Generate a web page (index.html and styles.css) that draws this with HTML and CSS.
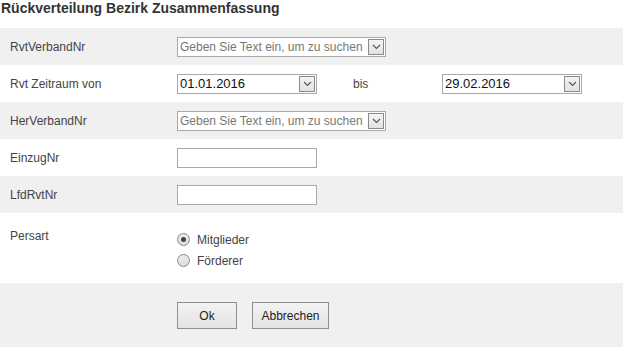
FILE: index.html
```html
<!DOCTYPE html>
<html lang="de">
<head>
    <meta charset="UTF-8">
    <title>Rückverteilung Bezirk Zusammenfassung</title>
    <link rel="stylesheet" href="styles.css">
</head>
<body>
    <h1 class="title">Rückverteilung Bezirk Zusammenfassung</h1>
    <div class="form">
        <div class="row grey">
            <div class="label">RvtVerbandNr</div>
            <div class="combo search">
                <span class="combo-text placeholder">Geben Sie Text ein, um zu suchen</span>
                <span class="arrow"><svg width="9" height="6" viewBox="0 0 9 6"><path d="M1 1 L4.5 4.5 L8 1" fill="none" stroke="#555" stroke-width="1.1"/></svg></span>
            </div>
        </div>
        <div class="row">
            <div class="label">Rvt Zeitraum von</div>
            <div class="combo date">
                <span class="combo-text">01.01.2016</span>
                <span class="arrow"><svg width="9" height="6" viewBox="0 0 9 6"><path d="M1 1 L4.5 4.5 L8 1" fill="none" stroke="#555" stroke-width="1.1"/></svg></span>
            </div>
            <div class="bis">bis</div>
            <div class="combo date">
                <span class="combo-text">29.02.2016</span>
                <span class="arrow"><svg width="9" height="6" viewBox="0 0 9 6"><path d="M1 1 L4.5 4.5 L8 1" fill="none" stroke="#555" stroke-width="1.1"/></svg></span>
            </div>
        </div>
        <div class="row grey">
            <div class="label">HerVerbandNr</div>
            <div class="combo search">
                <span class="combo-text placeholder">Geben Sie Text ein, um zu suchen</span>
                <span class="arrow"><svg width="9" height="6" viewBox="0 0 9 6"><path d="M1 1 L4.5 4.5 L8 1" fill="none" stroke="#555" stroke-width="1.1"/></svg></span>
            </div>
        </div>
        <div class="row">
            <div class="label">EinzugNr</div>
            <input class="textbox" type="text">
        </div>
        <div class="row grey">
            <div class="label">LfdRvtNr</div>
            <input class="textbox" type="text">
        </div>
        <div class="row tall">
            <div class="label">Persart</div>
            <div class="radios">
                <div class="radio"><span class="dot checked"></span>Mitglieder</div>
                <div class="radio"><span class="dot"></span>Förderer</div>
            </div>
        </div>
        <div class="buttons">
            <button class="btn ok">Ok</button>
            <button class="btn cancel">Abbrechen</button>
        </div>
    </div>
</body>
</html>
```
FILE: styles.css
```css
body {
    margin: 0;
    font-family: "Liberation Sans", Arial, sans-serif;
    font-size: 12px;
    color: #333;
    background: #fff;
}
.title {
    margin: 0;
    padding: 0 0 0 1px;
    height: 28px;
    font-size: 14px;
    font-weight: bold;
    color: #333;
    line-height: 17px;
}
.row {
    display: flex;
    align-items: center;
    height: 37px;
}
.row.grey {
    background: #f0f0f0;
}
.label {
    width: 167px;
    padding-left: 10px;
    color: #444;
}
.combo {
    display: flex;
    align-items: center;
    box-sizing: border-box;
    height: 20px;
    border: 1px solid #a9a9a9;
    background: #fff;
    padding: 0 1px 0 2px;
}
.combo.search {
    width: 209px;
}
.combo.date {
    width: 140px;
}
.combo-text {
    flex: 1;
    white-space: nowrap;
    overflow: hidden;
    color: #111;
    font-size: 13px;
}
.combo-text.placeholder {
    color: #777;
    font-size: 12px;
}
.arrow {
    display: flex;
    align-items: center;
    justify-content: center;
    box-sizing: border-box;
    width: 16px;
    height: 16px;
    border: 1px solid #8a8a8a;
    background: linear-gradient(#f4f4f4, #e2e2e2);
}
.bis {
    width: 125px;
    padding-left: 36px;
    box-sizing: border-box;
    color: #444;
}
.textbox {
    box-sizing: border-box;
    width: 140px;
    height: 20px;
    margin: 0;
    border: 1px solid #a9a9a9;
    font-family: inherit;
}
.row.tall {
    height: 70px;
    align-items: flex-start;
}
.row.tall .label {
    padding-top: 16px;
}
.radios {
    padding-top: 16px;
}
.radio {
    display: flex;
    align-items: center;
    height: 21px;
    color: #444;
}
.dot {
    box-sizing: border-box;
    width: 13px;
    height: 13px;
    margin-right: 7px;
    border: 1px solid #8a8a8a;
    border-radius: 50%;
    background: linear-gradient(#ececec, #dcdcdc);
    position: relative;
}
.dot.checked::after {
    content: "";
    position: absolute;
    left: 3px;
    top: 3px;
    width: 5px;
    height: 5px;
    border-radius: 50%;
    background: #444;
}
.buttons {
    display: flex;
    gap: 15px;
    height: 64px;
    padding: 19px 0 0 177px;
    box-sizing: border-box;
    background: #f0f0f0;
}
.btn {
    height: 27px;
    padding: 0;
    border: 1px solid #8f8f8f;
    background: linear-gradient(#f2f2f2, #e4e4e4);
    font-family: inherit;
    font-size: 12px;
    color: #222;
}
.btn.ok {
    width: 60px;
}
.btn.cancel {
    width: 77px;
}
```
